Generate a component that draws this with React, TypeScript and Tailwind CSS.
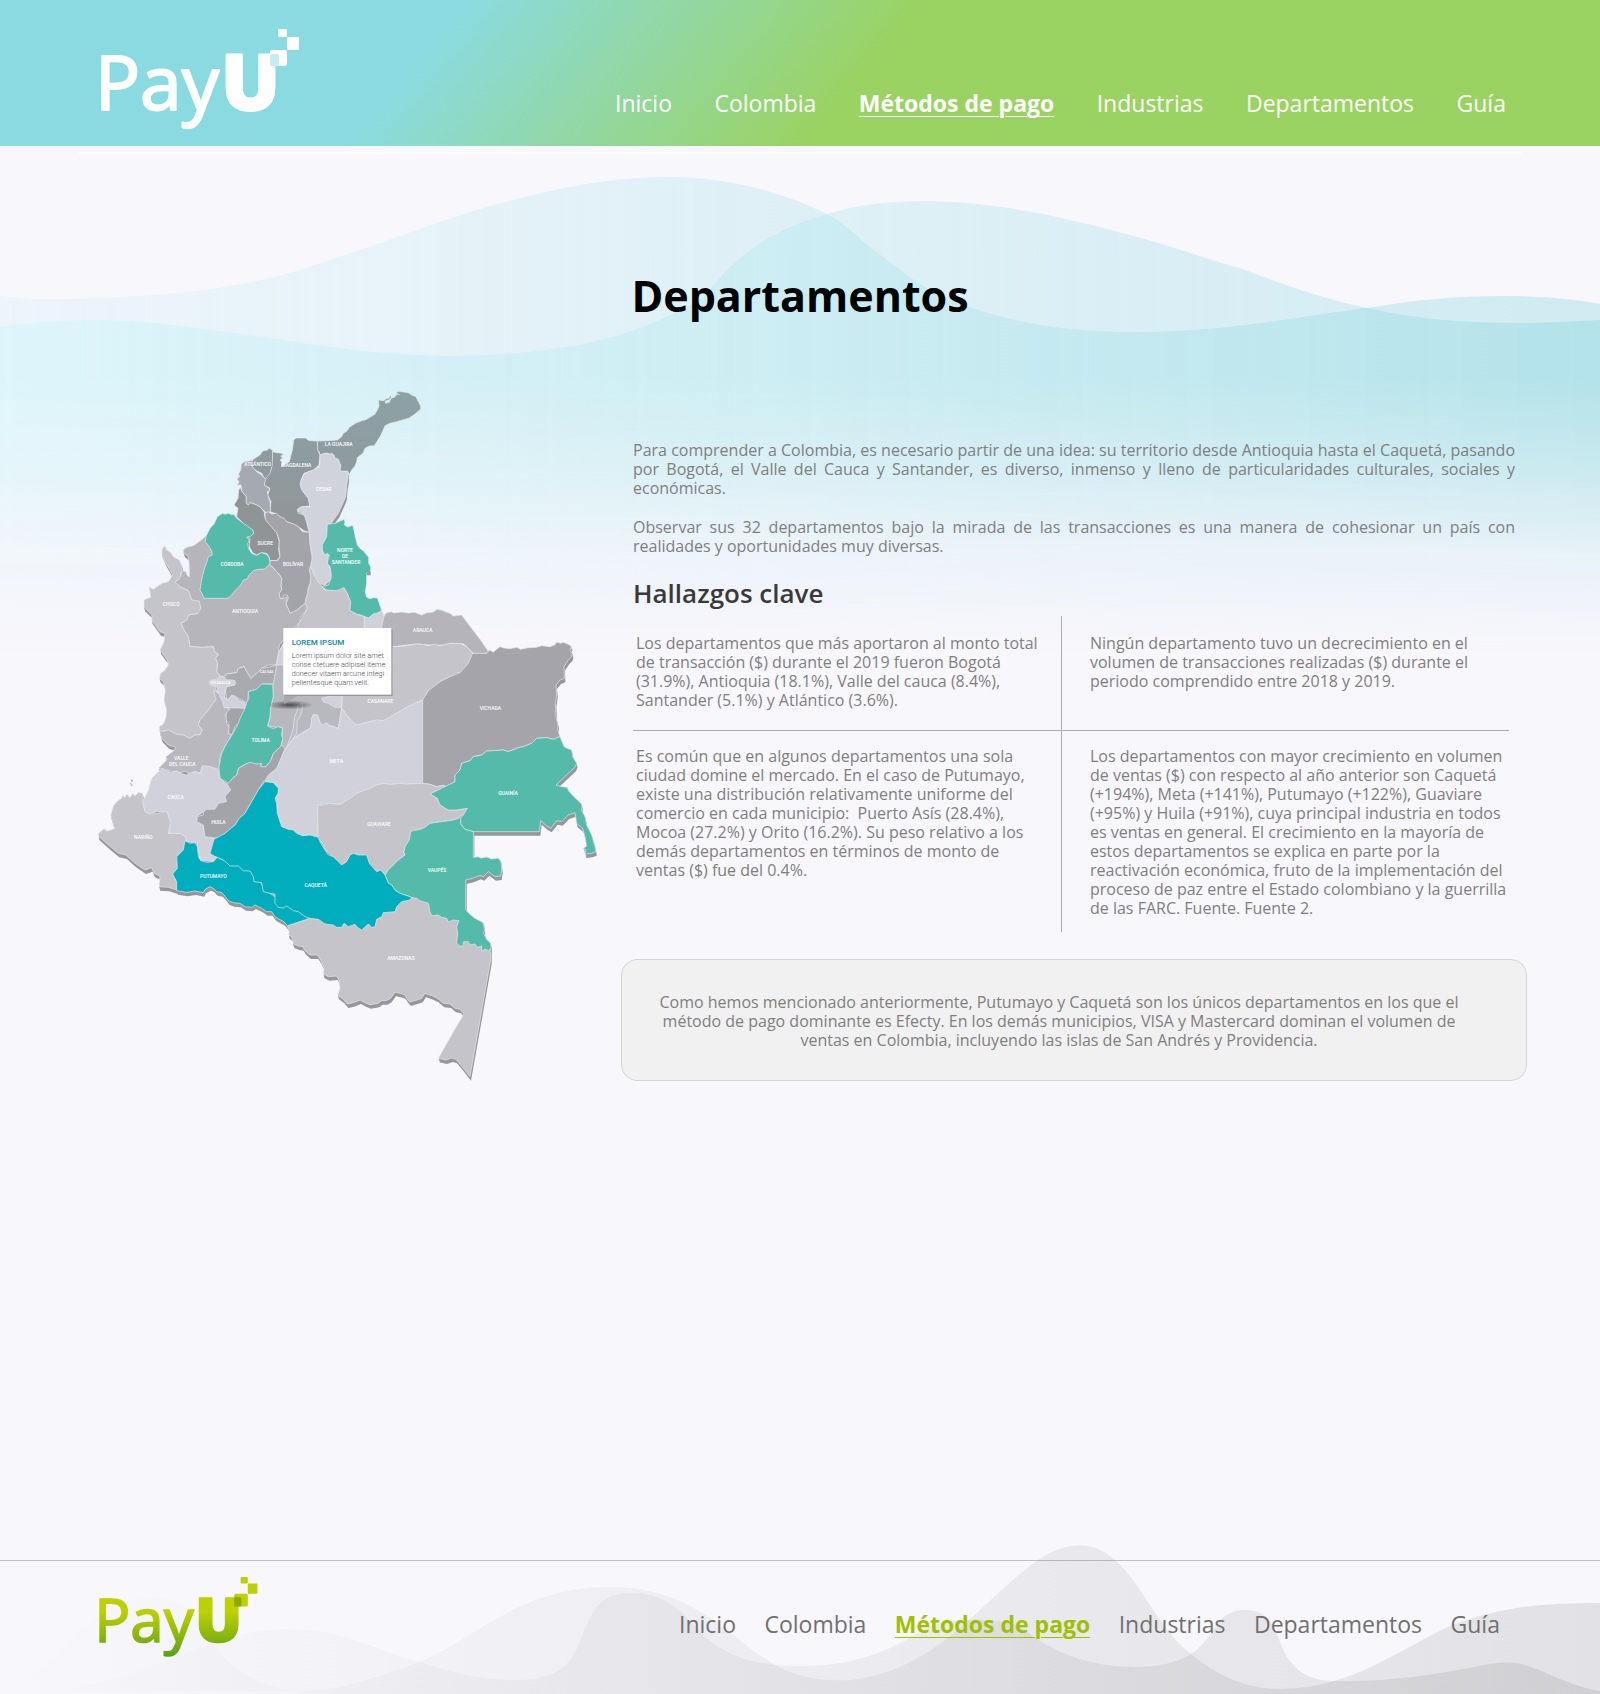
import React from "react";

const NAV = ["Inicio", "Colombia", "Métodos de pago", "Industrias", "Departamentos", "Guía"];
const ACTIVE = "Métodos de pago";

const LIGHT = "#c4c4ca";
const MID = "#b5b5bb";
const DARK = "#a4a4aa";
const PALE = "#d1d1dc";
const GREEN = "#54bbab";
const TEAL = "#00adbd";
const SHADE = "url(#shade)";

type Region = { name: string; fill: string; points: string; flat?: boolean };

const REGIONS: Region[] = [
  {
    name: "Santander",
    fill: LIGHT,
    points:
      "693,590 705,620 718,640 735,660 770,660 792,653 802,670 812,695 810,722 830,732 853,740 853,800 870,900 600,900 590,885 595,850 610,820 640,790 660,755 682,715 676,700 690,640 688,600",
  },
  {
    name: "Boyacá",
    fill: PALE,
    points:
      "853,740 865,744 880,732 905,722 912,735 914,752 905,770 900,800 940,830 937,980 600,980 588,885 595,850 612,820 853,820",
  },
  {
    name: "Cundinamarca",
    fill: "#b8b8bf",
    points:
      "588,885 612,885 612,970 790,970 787,980 785,1015 775,1075 761,1070 745,1065 738,1058 730,1066 722,1062 712,1035 700,1034 695,1045 694,1060 690,1075 664,1090 640,1105 626,1124 615,1138 605,1125 606,1105 608,1072 590,1072 563,1068 570,1040 572,1010 580,980 578,943",
  },
  { name: "Cundinamarca norte", fill: PALE, points: "725,985 750,978 785,975 784,1012 765,1012 745,1000 730,996" },
  {
    name: "Bogotá",
    fill: "#bdbdc4",
    points: "655,1005 668,1000 665,1025 660,1040 652,1050 650,1090 642,1102 618,1136 632,1100 640,1075 644,1040 650,1025",
  },
  {
    name: "Arauca",
    fill: "#b4b4ba",
    flat: true,
    points:
      "913,735 920,728 935,725 940,729 965,726 985,729 1003,727 1012,730 1025,735 1040,728 1060,726 1070,718 1085,720 1095,725 1110,730 1120,738 1145,735 1160,755 1200,808 1228,848 1208,851 1180,850 1160,830 1150,822 1110,820 1100,826 1045,825 1010,822 940,830 900,800 905,770",
  },
  {
    name: "Casanare",
    fill: LIGHT,
    points:
      "938,830 975,828 1010,822 1032,824 1045,827 1062,823 1080,827 1110,820 1140,820 1160,830 1178,850 1174,862 1165,880 1155,898 1140,908 1125,910 1110,920 1092,928 1080,935 1074,948 1060,955 1045,962 1040,975 1028,990 1005,998 980,1012 965,1024 940,1035 928,1048 910,1052 888,1050 868,1056 850,1060 838,1067 825,1062 810,1045 800,1040 792,1025 785,1015 787,980 790,960 937,960",
  },
  {
    name: "La Guajira",
    fill: SHADE,
    flat: true,
    points:
      "712,213 740,212 772,210 785,200 790,190 800,184 808,172 826,160 843,153 860,148 885,132 893,118 897,108 895,90 912,92 918,86 927,84 932,76 934,82 926,90 916,93 917,100 928,97 932,86 945,80 951,72 958,74 948,68 954,64 970,66 985,68 995,75 1008,80 1014,93 1022,108 1022,117 1008,130 988,144 950,155 930,160 915,167 908,184 900,200 883,227 868,228 855,235 850,248 842,255 832,263 830,275 825,288 815,300 808,314 803,304 780,304 782,285 765,270 762,255 740,250 720,255 718,246 712,240",
  },
  {
    name: "Magdalena",
    fill: SHADE,
    flat: true,
    points:
      "641,210 648,204 678,204 682,209 690,212 712,213 713,240 720,255 717,285 700,300 672,310 663,330 662,350 670,365 685,385 690,408 665,410 652,418 655,430 672,435 680,455 688,488 672,482 655,470 640,462 620,455 600,440 585,430 570,425 573,395 563,375 570,355 553,345 555,325 572,300 578,245 590,248 607,250 609,254 602,258 608,265 600,270 606,276 605,290 615,282 628,275 637,240",
  },
  {
    name: "Atlántico",
    fill: SHADE,
    flat: true,
    points: "514,273 527,263 540,255 548,243 562,240 566,235 573,237 578,242 577,285 570,310 555,328 545,310 525,300 516,290",
  },
  {
    name: "Bolívar norte",
    fill: "#a5aab2",
    flat: true,
    points:
      "492,275 516,271 518,292 530,305 545,315 557,328 553,345 568,355 568,363 562,365 564,378 570,395 572,425 560,428 548,420 542,412 530,405 512,398 505,405 499,400 498,378 486,365 483,345 470,345 478,336 471,328 480,318 474,315 482,300 484,283",
  },
  {
    name: "Sucre",
    fill: "#8f9497",
    flat: true,
    points:
      "481,352 486,365 498,378 499,400 505,405 512,398 530,405 542,412 553,427 555,445 562,455 575,470 590,488 598,515 596,540 600,560 590,572 570,572 568,562 560,550 545,548 530,555 518,548 508,530 510,505 500,500 520,492 518,480 495,465 480,450 470,440 474,415 462,405 474,385 476,360",
  },
  {
    name: "Bolívar",
    fill: "#a3a3aa",
    points:
      "555,430 565,425 575,432 590,430 600,440 612,445 620,455 640,462 655,470 668,485 688,487 690,520 697,570 692,585 688,600 692,620 690,640 684,655 682,670 676,690 676,700 650,720 640,730 630,730 624,715 618,702 625,685 622,675 612,675 608,686 600,685 597,670 605,660 603,645 605,625 600,615 590,605 580,592 570,585 570,572 592,572 600,560 597,530 598,510 590,488 572,468 557,450",
  },
  {
    name: "Cesar",
    fill: "#d0d2dc",
    points:
      "720,255 732,250 740,249 750,253 757,250 762,262 775,268 782,285 780,304 803,304 804,325 800,345 797,380 790,397 775,430 752,462 742,463 740,500 736,515 727,525 729,542 735,556 746,548 742,580 754,605 750,630 735,646 718,640 705,620 693,590 697,560 690,520 688,488 680,455 675,437 665,430 652,422 655,416 665,410 690,412 685,385 665,360 660,340 672,312 700,300 717,292 720,275",
  },
  {
    name: "Norte de Santander",
    fill: GREEN,
    flat: true,
    points:
      "742,463 765,460 775,455 788,450 792,447 795,457 793,465 802,471 818,466 822,480 826,500 832,525 842,537 850,542 866,562 866,580 872,590 872,605 860,610 860,640 856,665 860,682 870,686 880,683 892,684 897,697 905,722 890,730 880,732 865,744 848,737 830,732 810,722 812,695 802,670 792,653 770,662 740,660 726,650 745,645 755,620 750,590 742,580 748,555 741,550 735,556 727,540 727,525 740,500",
  },
  {
    name: "Antioquia",
    fill: MID,
    points:
      "380,495 367,508 350,520 340,527 320,532 309,540 312,550 325,560 328,590 328,620 322,617 318,605 308,602 300,625 285,637 300,650 325,662 330,677 335,690 358,700 362,715 355,730 325,735 320,750 303,760 312,780 325,800 330,830 370,832 385,830 400,830 403,845 415,852 407,865 412,880 410,905 425,925 440,912 470,908 475,895 492,890 500,905 512,925 528,912 545,895 565,885 588,885 595,850 598,825 625,795 660,755 660,745 682,715 676,700 650,720 630,730 624,715 618,702 622,680 608,686 600,685 597,670 605,660 603,645 605,625 590,605 570,585 480,560",
  },
  {
    name: "Córdoba",
    fill: GREEN,
    points:
      "380,495 390,475 402,462 412,440 428,430 435,433 445,430 455,434 462,433 470,445 490,460 500,466 518,480 522,490 510,500 500,501 508,512 503,520 505,535 515,550 530,556 545,548 560,553 568,565 570,580 555,597 535,598 520,602 505,618 502,627 490,630 482,645 465,662 450,680 442,685 372,685 367,672 360,660 365,630 372,600 380,578 385,560 397,555 395,543 388,530 376,515 378,500",
  },
  {
    name: "Chocó",
    fill: LIGHT,
    points:
      "247,535 255,528 260,540 272,547 280,560 298,570 307,590 306,600 300,620 285,637 300,650 325,662 330,677 335,690 358,693 362,715 350,730 325,735 320,750 303,760 312,780 325,800 330,830 370,832 400,830 403,845 415,852 407,865 412,880 410,905 425,925 400,930 410,965 410,985 400,1000 385,1020 370,1035 360,1050 355,1065 367,1080 360,1095 345,1095 330,1105 310,1095 290,1093 265,1080 245,1085 238,1080 238,1070 250,1062 258,1040 260,1015 252,990 256,960 250,935 238,925 242,910 255,900 265,885 262,870 240,840 252,815 255,790 240,785 222,760 215,750 216,735 192,712 192,690 213,680 207,650 220,658 245,640 265,635 278,615 270,600 258,580 245,550",
  },
  {
    name: "Caldas",
    fill: "#a9a9b0",
    points:
      "440,912 470,908 475,895 485,893 492,890 500,905 512,925 528,912 545,895 565,892 590,885 585,915 580,942 545,942 530,958 505,965 503,1000 485,990 475,985 460,975 440,990 435,950 465,945 465,932 430,930",
  },
  {
    name: "Quindío",
    fill: "#a3a3aa",
    points: "440,1012 460,1010 500,1010 492,1035 480,1055 465,1070 455,1095 445,1090 447,1060 437,1050",
  },
  {
    name: "Valle del Cauca",
    fill: "#b8b8be",
    points:
      "238,1080 245,1085 265,1080 290,1093 310,1095 330,1105 345,1095 360,1095 367,1080 355,1065 360,1050 385,1020 408,988 400,960 440,985 432,1012 450,1017 437,1032 440,1060 447,1070 445,1090 455,1095 440,1120 420,1160 417,1198 390,1190 365,1190 362,1210 345,1205 330,1212 315,1204 300,1208 270,1203 245,1195 235,1195 262,1168 257,1160 278,1145 288,1132 265,1125 245,1105",
  },
  {
    name: "Risaralda",
    fill: PALE,
    points:
      "388,935 395,930 413,930 420,918 430,920 440,930 460,930 467,938 462,945 440,950 436,965 433,985 445,990 455,975 470,983 480,992 495,998 500,1008 497,1016 480,1014 455,1014 432,1012 428,995 415,970 410,950 390,943",
  },
  {
    name: "Nariño",
    fill: LIGHT,
    points:
      "188,1270 190,1300 195,1325 220,1332 262,1325 272,1355 265,1390 300,1390 320,1402 322,1415 310,1440 293,1455 292,1495 278,1512 290,1535 290,1560 265,1552 237,1550 240,1518 222,1510 215,1493 195,1500 165,1480 138,1455 115,1450 85,1425 55,1398 56,1390 72,1376 82,1383 105,1375 100,1363 92,1335 100,1308 112,1293 125,1285 128,1275 134,1283 140,1272 150,1283 158,1270 165,1278 175,1267",
  },
  {
    name: "Cauca",
    fill: PALE,
    points:
      "230,1210 245,1197 275,1208 290,1202 300,1210 320,1215 330,1208 345,1205 362,1210 367,1187 390,1190 415,1200 418,1222 440,1242 455,1260 440,1285 442,1292 415,1300 405,1315 370,1325 350,1340 352,1355 370,1368 375,1400 405,1405 390,1450 412,1460 405,1475 362,1470 350,1418 320,1415 316,1400 300,1390 265,1390 272,1360 262,1325 230,1325 210,1332 195,1325 188,1295 205,1260 215,1225",
  },
  {
    name: "Huila",
    fill: "#a3a3aa",
    points:
      "615,1135 606,1160 590,1200 570,1215 552,1232 535,1260 515,1295 495,1330 478,1345 465,1365 435,1390 415,1405 375,1400 370,1365 350,1355 352,1340 370,1335 370,1325 380,1318 405,1318 415,1300 440,1295 435,1280 452,1260 440,1240 470,1215 475,1195 510,1175 538,1178 545,1190 558,1190 572,1172 580,1150 605,1125",
  },
  {
    name: "Tolima",
    fill: GREEN,
    points:
      "505,965 530,958 545,942 578,943 580,980 572,1010 570,1040 563,1068 580,1076 595,1070 608,1075 604,1095 608,1105 602,1130 590,1140 580,1150 570,1175 555,1190 542,1190 545,1180 530,1182 510,1177 495,1183 475,1195 470,1215 460,1222 445,1240 420,1225 417,1190 425,1150 440,1120 450,1105 465,1080 475,1060 480,1045 495,1015 500,998 507,985",
  },
  {
    name: "Meta",
    fill: PALE,
    points:
      "785,1015 800,1035 812,1050 828,1065 850,1060 880,1052 910,1052 940,1035 980,1012 1028,990 1028,1240 1010,1242 980,1240 960,1244 930,1242 910,1240 890,1245 870,1255 850,1262 830,1270 810,1285 780,1303 745,1300 715,1305 712,1400 690,1395 668,1397 650,1390 640,1380 625,1378 605,1370 592,1330 590,1300 585,1285 595,1260 580,1238 555,1235 565,1215 590,1195 605,1160 615,1138 640,1105 664,1090 690,1075 694,1060 695,1045 700,1034 712,1035 722,1062 730,1066 738,1058 745,1065 775,1075",
  },
  {
    name: "Vichada",
    fill: DARK,
    points:
      "1028,990 1045,962 1080,935 1110,920 1140,908 1165,880 1178,850 1220,850 1228,840 1240,846 1260,830 1272,834 1290,836 1310,832 1322,838 1345,833 1370,832 1385,827 1410,830 1425,824 1430,816 1442,820 1450,817 1465,823 1474,829 1470,842 1477,850 1475,860 1465,870 1452,890 1453,925 1440,930 1428,945 1430,970 1426,1000 1428,1040 1434,1065 1433,1080 1440,1100 1420,1108 1400,1103 1370,1105 1355,1120 1330,1130 1315,1133 1285,1145 1270,1140 1220,1143 1205,1155 1180,1160 1170,1172 1145,1180 1140,1200 1125,1215 1125,1235 1100,1250 1090,1246 1070,1250 1050,1243 1028,1240",
  },
  {
    name: "Guaviare",
    fill: LIGHT,
    points:
      "1028,1240 1050,1243 1070,1250 1090,1246 1100,1252 1070,1264 1050,1272 1072,1285 1080,1305 1105,1320 1130,1320 1162,1315 1158,1330 1120,1350 1075,1356 1050,1360 1035,1372 1020,1378 1000,1378 992,1384 988,1410 975,1430 972,1447 975,1455 955,1468 940,1485 925,1497 915,1513 902,1500 890,1505 870,1490 860,1465 840,1462 832,1452 815,1450 810,1462 785,1485 770,1475 760,1460 735,1440 730,1425 715,1405 712,1305 730,1306 745,1300 780,1303 810,1285 830,1270 850,1262 870,1255 890,1245 910,1240 930,1244 960,1240 980,1242",
  },
  {
    name: "Guainía",
    fill: GREEN,
    points:
      "1440,1100 1452,1130 1462,1135 1475,1140 1478,1160 1490,1180 1485,1192 1460,1215 1428,1245 1445,1250 1462,1252 1465,1262 1482,1280 1505,1302 1505,1320 1515,1340 1520,1365 1535,1395 1545,1430 1547,1445 1535,1450 1515,1452 1518,1440 1510,1435 1520,1428 1515,1400 1508,1375 1490,1360 1485,1328 1465,1335 1445,1355 1430,1352 1412,1375 1400,1368 1382,1352 1378,1385 1180,1385 1155,1378 1142,1362 1142,1345 1150,1335 1162,1315 1130,1320 1105,1320 1080,1305 1072,1285 1050,1272 1125,1235 1125,1215 1140,1200 1145,1180 1170,1172 1180,1160 1205,1155 1220,1143 1270,1140 1285,1145 1315,1133 1330,1130 1355,1120 1370,1105 1400,1103 1420,1108",
  },
  {
    name: "Amazonas",
    fill: LIGHT,
    points:
      "622,1667 628,1680 626,1695 635,1700 640,1722 655,1728 668,1730 675,1742 690,1755 712,1755 722,1770 732,1792 730,1812 745,1820 770,1818 777,1830 780,1855 773,1875 790,1888 802,1902 820,1898 840,1890 855,1898 870,1904 895,1900 905,1892 920,1892 932,1885 945,1867 960,1870 975,1875 980,1885 990,1896 1010,1890 1025,1885 1035,1870 1058,1878 1072,1885 1090,1900 1110,1902 1125,1915 1140,1918 1152,1932 1130,1968 1075,2065 1098,2070 1115,2064 1128,2068 1148,2092 1170,2120 1232,1770 1232,1732 1135,1645 1100,1620 990,1570 900,1600 690,1645",
  },
  {
    name: "Vaupés",
    fill: GREEN,
    points:
      "1180,1385 1180,1462 1195,1460 1203,1464 1220,1461 1235,1467 1255,1464 1263,1475 1265,1500 1262,1518 1245,1520 1225,1505 1210,1520 1200,1516 1180,1524 1157,1530 1157,1620 1170,1633 1185,1645 1210,1658 1213,1680 1211,1690 1220,1708 1232,1720 1233,1735 1225,1742 1215,1737 1205,1744 1205,1728 1192,1732 1185,1722 1170,1725 1165,1715 1150,1715 1148,1730 1140,1728 1130,1720 1133,1690 1130,1670 1137,1652 1120,1650 1105,1656 1100,1645 1085,1642 1075,1635 1055,1637 1050,1625 1045,1600 1020,1592 1010,1585 995,1582 975,1575 960,1570 945,1560 935,1545 925,1540 915,1515 925,1500 940,1485 955,1470 975,1455 972,1447 975,1430 988,1410 992,1384 1020,1378 1035,1372 1050,1360 1120,1350 1142,1343 1142,1362 1155,1378",
  },
  {
    name: "Putumayo",
    fill: TEAL,
    points:
      "315,1412 330,1420 345,1418 352,1430 355,1460 362,1472 380,1477 400,1475 412,1462 430,1470 475,1480 530,1515 555,1560 600,1590 620,1600 690,1645 622,1667 612,1655 598,1648 585,1640 575,1625 560,1625 545,1615 525,1605 515,1612 495,1610 480,1600 460,1598 445,1592 435,1578 425,1568 410,1565 400,1555 390,1550 375,1558 370,1568 345,1563 320,1567 290,1562 290,1535 278,1512 292,1495 290,1460 310,1440",
  },
  {
    name: "Caquetá",
    fill: TEAL,
    points:
      "555,1235 580,1238 595,1255 594,1270 585,1285 590,1300 592,1330 605,1370 625,1378 640,1380 650,1390 668,1397 690,1395 715,1402 722,1420 735,1440 745,1455 760,1460 785,1485 800,1475 810,1455 820,1450 835,1455 860,1455 868,1480 890,1505 902,1500 915,1515 925,1540 935,1545 945,1560 960,1570 975,1575 995,1582 990,1590 965,1595 950,1610 945,1625 910,1628 905,1640 890,1648 885,1670 875,1672 865,1662 845,1680 832,1672 825,1663 805,1670 792,1660 785,1672 770,1672 760,1665 735,1662 715,1648 690,1645 675,1640 655,1625 640,1622 620,1608 610,1614 595,1612 585,1600 585,1572 570,1570 550,1565 545,1538 522,1535 520,1520 510,1503 490,1502 475,1488 450,1488 440,1478 430,1470 412,1462 402,1458 390,1450 402,1408 435,1390 465,1365 478,1345 495,1330 515,1295 535,1260",
  },
];

const LABELS: [string, number, number][] = [
  ["LA GUAJIRA", 776, 227],
  ["ATLÁNTICO", 533, 288],
  ["MAGDALENA", 649, 291],
  ["CESAR", 731, 363],
  ["SUCRE", 556, 526],
  ["CÓRDOBA", 456, 587],
  ["BOLÍVAR", 639, 588],
  ["NORTE", 795, 545],
  ["DE", 795, 564],
  ["SANTANDER", 798, 582],
  ["CHOCÓ", 274, 707],
  ["ANTIOQUIA", 495, 729],
  ["ARAUCA", 1028, 785],
  ["CASANARE", 901, 999],
  ["VICHADA", 1231, 1019],
  ["TOLIMA", 542, 1116],
  ["VALLE", 304, 1171],
  ["DEL CAUCA", 307, 1189],
  ["META", 769, 1179],
  ["CAUCA", 287, 1286],
  ["HUILA", 415, 1363],
  ["NARIÑO", 190, 1406],
  ["GUAINÍA", 1284, 1276],
  ["GUAVIARE", 897, 1368],
  ["PUTUMAYO", 400, 1523],
  ["CAQUETÁ", 707, 1551],
  ["VAUPÉS", 1071, 1507],
  ["AMAZONAS", 963, 1769],
];

const TOOLTIP = [
  "Lorem ipsum dolor site amet",
  "conse ctetuere adipisel iteme",
  "donecer vitaem arcune integi",
  "pellentesque quam velit.",
];

function ColombiaMap() {
  return (
    <svg viewBox="3 0 1620 2190" className="block w-full" role="img" aria-label="Mapa de Colombia por departamentos">
      <defs>
        <linearGradient id="shade" gradientUnits="userSpaceOnUse" x1="0" y1="60" x2="0" y2="500">
          <stop offset="0" stopColor="#8ca2a6" />
          <stop offset="1" stopColor="#919497" />
        </linearGradient>
        <radialGradient id="pin">
          <stop offset="0" stopColor="#3f3f46" stopOpacity="0.9" />
          <stop offset="1" stopColor="#3f3f46" stopOpacity="0" />
        </radialGradient>
      </defs>
      <g fill="#97979b">
        {[4, 8, 12].map((d) => (
          <g key={d} transform={`translate(${d / 4} ${d})`}>
            {REGIONS.filter((r) => !r.flat).map((r) => (
              <polygon key={r.name} points={r.points} />
            ))}
          </g>
        ))}
      </g>
      <g stroke="#e9e9f0" strokeWidth="2" strokeLinejoin="round">
        {REGIONS.map((r) => (
          <polygon key={r.name} points={r.points} fill={r.fill} />
        ))}
      </g>
      <path d="M860 610l8-8 4 4v10h-12z" fill="#97979b" />
      <path d="M154 1229h4v6h-4zM151 1238h3v5h-3zM154 1243h3v5h-3z" fill="#9a9aa0" />
      <g fill="#fff" fontFamily="Roboto, sans-serif" fontWeight="500" fontSize="15" textAnchor="middle">
        {LABELS.map(([t, x, y]) => (
          <text key={t + y} x={x} y={y}>
            {t}
          </text>
        ))}
        <text x="560" y="908" fontSize="11">CALDAS</text>
        <text x="422" y="941" fontSize="11">RISARALDA</text>
      </g>
      <ellipse cx="630" cy="1005" rx="70" ry="14" fill="url(#pin)" />
      <path d="M612 974h46l-46 28z" fill="#a8a8ae" />
      <rect x="614" y="778" width="324" height="200" fill="#97979c" />
      <rect x="610" y="774" width="324" height="200" fill="#fff" />
      <g fontFamily="Roboto, sans-serif">
        <text x="635" y="825" fontSize="24" fontWeight="500" fill="#0c87a0">LOREM IPSUM</text>
        <g fontSize="22" fontWeight="300" fill="#4c4c50">
          {TOOLTIP.map((t, i) => (
            <text key={t} x="635" y={864 + i * 27}>
              {t}
            </text>
          ))}
        </g>
      </g>
    </svg>
  );
}

function Logo({ className, id, from, to, overlap }: { className: string; id: string; from: string; to: string; overlap: string }) {
  const paint = `url(#${id})`;
  return (
    <svg viewBox="-10 -10 210 120" className={className} role="img" aria-label="PayU">
      <defs>
        <linearGradient id={id} gradientUnits="userSpaceOnUse" x1="0" y1="30" x2="0" y2="100">
          <stop offset="0.2" stopColor={from} />
          <stop offset="1" stopColor={to} />
        </linearGradient>
      </defs>
      <g fill={paint} stroke={paint} strokeWidth="2" strokeLinejoin="round" fontFamily="Open Sans, sans-serif">
        <text x="-6" y="81" fontSize="75" fontWeight="400">Pay</text>
        <text x="120" y="81" fontSize="78" fontWeight="800">U</text>
      </g>
      <rect x="169" y="21" width="17" height="16" rx="2" fill={paint} />
      <rect x="169" y="25" width="9" height="12" rx="2" fill={overlap} />
      <rect x="186" y="8" width="12" height="13" rx="1" fill={paint} />
      <rect x="177" y="0" width="9" height="8" rx="1" fill={paint} />
    </svg>
  );
}

function NavLinks({ label, className, active }: { label: string; className: string; active: string }) {
  return (
    <nav aria-label={label} className={className}>
      {NAV.map((item) => (
        <a
          key={item}
          href="#"
          className={item === ACTIVE ? active : "font-normal"}
          aria-current={item === ACTIVE ? "page" : undefined}
        >
          {item}
        </a>
      ))}
    </nav>
  );
}

function HeroWaves() {
  return (
    <svg
      viewBox="0 0 1600 520"
      preserveAspectRatio="none"
      className="pointer-events-none absolute inset-x-0 top-0 h-[520px] w-full"
      aria-hidden="true"
    >
      <defs>
        <linearGradient id="waveA" x1="0" x2="1">
          <stop offset="0" stopColor="#c5edf5" stopOpacity="0.2" />
          <stop offset="0.45" stopColor="#a9e4ea" stopOpacity="0.32" />
          <stop offset="1" stopColor="#74d0d9" stopOpacity="0.3" />
        </linearGradient>
        <linearGradient id="waveB" x1="0" x2="1">
          <stop offset="0" stopColor="#c4f5fa" stopOpacity="0.4" />
          <stop offset="0.5" stopColor="#a5e5ea" stopOpacity="0.32" />
          <stop offset="0.75" stopColor="#8bdae1" stopOpacity="0.28" />
          <stop offset="1" stopColor="#74d0d9" stopOpacity="0.32" />
        </linearGradient>
        <linearGradient id="fade" x1="0" y1="0" x2="0" y2="1">
          <stop offset="0.45" stopColor="#fff" />
          <stop offset="0.63" stopColor="#fff" stopOpacity="0.65" />
          <stop offset="0.78" stopColor="#fff" stopOpacity="0.25" />
          <stop offset="0.97" stopColor="#fff" stopOpacity="0" />
        </linearGradient>
        <mask id="fadeMask">
          <rect width="1600" height="520" fill="url(#fade)" />
        </mask>
      </defs>
      <g mask="url(#fadeMask)">
        <path
          fill="url(#waveA)"
          d="M0 150C25 153 45 154 71 153C160 150 235 145 306 122C355 106 375 99 420 83C500 54 590 31 668 31C735 31 790 50 827 68C850 80 860 95 878 107C900 124 925 145 959 157C1010 177 1070 187 1148 186C1240 184 1300 170 1367 162C1420 153 1460 150 1505 150C1540 150 1575 153 1600 158V520H0Z"
        />
        <path
          fill="url(#waveB)"
          d="M0 181C30 176 60 174 97 174C165 175 205 184 265 191C330 202 390 210 454 210C515 209 570 203 612 191C650 180 675 168 704 151C735 110 770 84 827 68C860 58 890 55 929 55C1000 57 1060 70 1122 87C1165 98 1205 112 1245 124C1280 137 1320 152 1367 162C1420 174 1470 177 1520 177C1550 177 1580 175 1600 174V520H0Z"
        />
      </g>
    </svg>
  );
}

function FooterWaves() {
  return (
    <svg
      viewBox="0 0 1600 150"
      preserveAspectRatio="none"
      className="pointer-events-none absolute inset-x-0 bottom-0 h-[150px] w-full"
      aria-hidden="true"
    >
      <defs>
        <linearGradient id="grey" gradientUnits="userSpaceOnUse" x1="0" y1="0" x2="1600" y2="0">
          <stop offset="0" stopColor="#777" stopOpacity="0" />
          <stop offset="0.4" stopColor="#777" stopOpacity="0.07" />
          <stop offset="0.7" stopColor="#777" stopOpacity="0.12" />
          <stop offset="1" stopColor="#777" stopOpacity="0.17" />
        </linearGradient>
      </defs>
      <g fill="url(#grey)">
        <path d="M0 142C60 136 80 54 153 54C200 54 205 100 235 123C255 138 275 146 300 147H0Z" />
        <path d="M40 148C160 138 200 85 290 85C345 85 375 107 420 118C450 128 480 136 515 136C580 136 575 100 592 70C602 53 615 49 633 49C665 49 683 68 702 90C725 112 755 122 800 122C850 122 885 110 925 85C950 73 990 73 1020 82C1050 108 1090 123 1135 123C1180 123 1200 108 1213 86C1220 73 1230 66 1246 66C1262 66 1272 74 1280 98C1288 120 1302 137 1335 137C1390 138 1430 131 1475 123C1495 118 1512 117 1525 121C1550 129 1575 144 1600 147V150H0Z" />
        <path d="M300 147C345 146 380 132 420 118C480 92 520 43 610 43C695 43 730 95 775 121C800 134 820 137 850 136C935 127 980 60 1025 26C1060 -4 1095 -10 1125 26C1150 56 1165 92 1195 113C1220 134 1250 145 1280 145C1350 145 1400 105 1450 82C1500 62 1545 59 1600 59V150H300Z" />
      </g>
    </svg>
  );
}

export default function App() {
  return (
    <div className="flex min-h-screen flex-col bg-[#f8f7fc] font-['Open_Sans',sans-serif] text-[#7f7f7f]">
      <header className="flex h-[146px] items-start justify-between bg-[linear-gradient(130deg,#8adbe1_27%,#9ad362_54%)] pl-[91px] pr-[94px]">
        <Logo id="logoHead" className="mt-[19px] w-[210px]" from="#ffffff" to="#ffffff" overlap="#c5ecf0" />
        <NavLinks
          label="Principal"
          className="mt-[87px] flex w-[891px] justify-between text-[23px] leading-8 text-white"
          active="font-bold underline decoration-1 underline-offset-4"
        />
      </header>

      <main className="relative flex-1 pb-20">
        <HeroWaves />
        <div className="mx-[79px] mt-[6px] h-[2px] bg-white" />
        <div className="relative">
          <h1 className="mt-28 text-center text-[43px] font-bold leading-[60px] text-black">Departamentos</h1>
          <div className="mt-11 grid grid-cols-[540px_minmax(0,1fr)] pl-[81px] pr-[73px]">
            <ColombiaMap />
            <div className="pt-[71px]">
              <div className="pl-3 pr-3 text-justify text-[16px] leading-[19px]">
                <p>
                  Para comprender a Colombia, es necesario partir de una idea: su territorio desde Antioquia hasta el
                  Caquetá, pasando por Bogotá, el Valle del Cauca y Santander, es diverso, inmenso y lleno de
                  particularidades culturales, sociales y económicas.
                </p>
                <p className="mt-5">
                  Observar sus 32 departamentos bajo la mirada de las transacciones es una manera de cohesionar un país
                  con realidades y oportunidades muy diversas.
                </p>
              </div>
              <h2 className="mb-[3px] ml-3 mt-[17px] text-[26px] font-semibold leading-10 text-[#3a3a3a]">Hallazgos clave</h2>
              <div className="ml-3 mr-[18px] grid grid-cols-[429px_minmax(0,1fr)] text-[16px] leading-[19px]">
                <p className="border-b border-r border-[#adadb0] pb-5 pl-[3px] pr-5 pt-[18px]">
                  Los departamentos que más aportaron al monto total de transacción ($) durante el 2019 fueron Bogotá
                  (31.9%), Antioquia (18.1%), Valle del cauca (8.4%), Santander (5.1%) y Atlántico (3.6%).
                </p>
                <p className="border-b border-[#adadb0] pb-5 pl-7 pr-5 pt-[18px]">
                  Ningún departamento tuvo un decrecimiento en el volumen de transacciones realizadas ($) durante el
                  periodo comprendido entre 2018 y 2019.
                </p>
                <p className="border-r border-[#adadb0] pb-3 pl-[3px] pr-8 pt-4">
                  Es común que en algunos departamentos una sola ciudad domine el mercado. En el caso de Putumayo,
                  existe una distribución relativamente uniforme del comercio en cada municipio:&nbsp; Puerto Asís (28.4%),
                  Mocoa (27.2%) y Orito (16.2%). Su peso relativo a los demás departamentos en términos de monto de
                  ventas ($) fue del 0.4%.
                </p>
                <p className="pb-[14px] pl-7 pt-4">
                  Los departamentos con mayor crecimiento en volumen de ventas ($) con respecto al año anterior son
                  Caquetá (+194%), Meta (+141%), Putumayo (+122%), Guaviare (+95%) y Huila (+91%), cuya principal
                  industria en todos es ventas en general. El crecimiento en la mayoría de estos departamentos se
                  explica en parte por la reactivación económica, fruto de la implementación del proceso de paz entre el
                  Estado colombiano y la guerrilla de las FARC. Fuente. Fuente 2.
                </p>
              </div>
              <p className="mt-[27px] rounded-2xl border border-[#d5d5d7] bg-[#f1f1f1] pb-[30px] pl-8 pr-[62px] pt-[33px] text-center text-[16px] leading-[19px]">
                Como hemos mencionado anteriormente, Putumayo y Caquetá son los únicos departamentos en los que el método
                de pago dominante es Efecty. En los demás municipios, VISA y Mastercard dominan el volumen de ventas en
                Colombia, incluyendo las islas de San Andrés y Providencia.
              </p>
            </div>
          </div>
        </div>
      </main>

      <footer className="relative flex h-[134px] items-start justify-between border-t border-[#bfbfc6] pl-[91px] pr-[100px]">
        <FooterWaves />
        <Logo id="logoFoot" className="relative mt-2 w-[168px]" from="#bdd000" to="#5a9e1c" overlap="#8fa800" />
        <NavLinks
          label="Pie de página"
          className="relative mt-[47px] flex w-[821px] justify-between text-[23px] leading-8 text-[#707070]"
          active="font-bold text-[#9fc000] underline decoration-1 underline-offset-4"
        />
      </footer>
    </div>
  );
}
